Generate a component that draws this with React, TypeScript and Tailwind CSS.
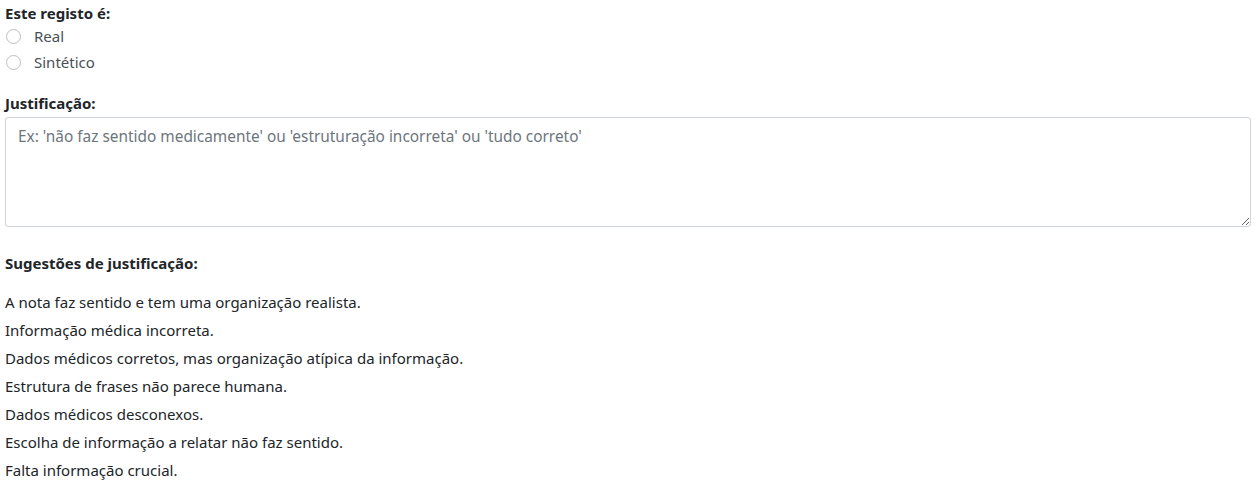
export default function App() {
  const suggestions = [
    "A nota faz sentido e tem uma organização realista.",
    "Informação médica incorreta.",
    "Dados médicos corretos, mas organização atípica da informação.",
    "Estrutura de frases não parece humana.",
    "Dados médicos desconexos.",
    "Escolha de informação a relatar não faz sentido.",
    "Falta informação crucial.",
  ];

  return (
    <div className="w-screen h-screen bg-white px-[5px] pt-[3px] text-[15px] text-[#212529] font-['Noto_Sans',sans-serif]">
      <p className="font-bold leading-[20px]">Este registo é:</p>
      <div className="flex flex-col">
        {["Real", "Sintético"].map((opt) => (
          <label key={opt} className="flex items-center h-[26px] text-[#495057]">
            <span className="w-[15px] h-[15px] rounded-full border border-[#bdbdbd] ml-[1px] mr-[13px]"></span>
            {opt}
          </label>
        ))}
      </div>

      <p className="font-bold leading-[20px] mt-[18px]">Justificação:</p>
      <textarea
        className="block w-full h-[110px] mt-[4px] border border-[#ced4da] rounded-[3px] px-[12px] py-[7px] text-[15.4px] placeholder:text-[#6c757d] resize-y"
        placeholder="Ex: 'não faz sentido medicamente' ou 'estruturação incorreta' ou 'tudo correto'"
      ></textarea>

      <p className="font-bold leading-[20px] mt-[26px]">Sugestões de justificação:</p>
      <div className="flex flex-col mt-[15px]">
        {suggestions.map((s) => (
          <p key={s} className="leading-[28px]">
            {s}
          </p>
        ))}
      </div>
    </div>
  );
}
